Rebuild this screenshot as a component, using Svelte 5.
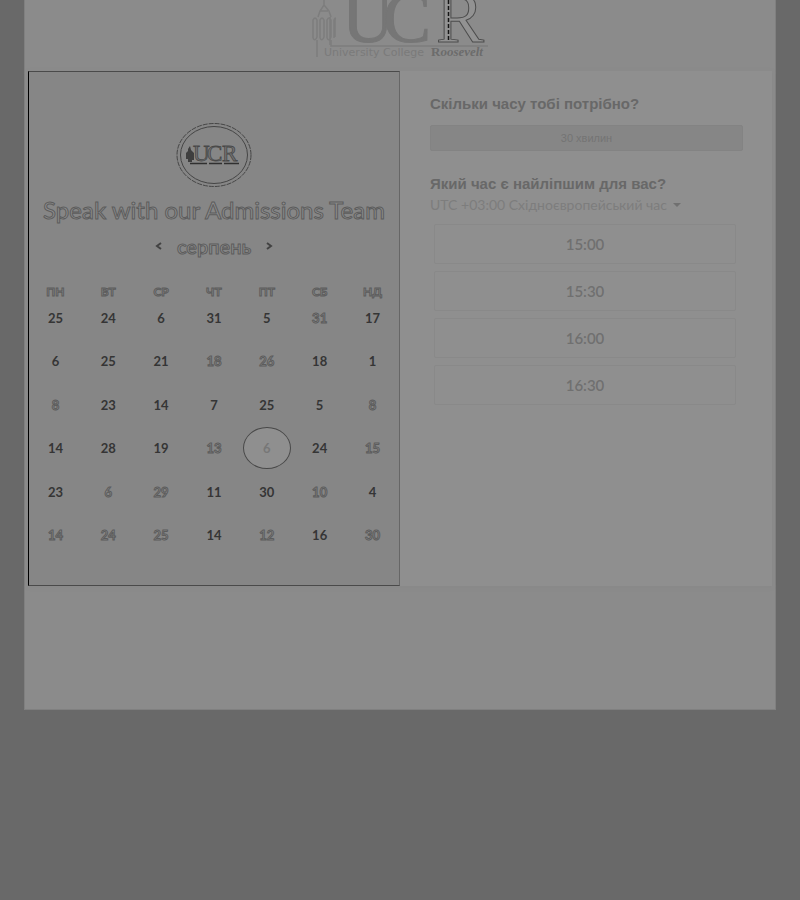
<script>
  const weekdays = ['ПН', 'ВТ', 'СР', 'ЧТ', 'ПТ', 'СБ', 'НД'];
  const weeks = [
    [25, 24, 6, 31, 5, 31, 17],
    [6, 25, 21, 18, 26, 18, 1],
    [8, 23, 14, 7, 25, 5, 8],
    [14, 28, 19, 13, 6, 24, 15],
    [23, 6, 29, 11, 30, 10, 4],
    [14, 24, 25, 14, 12, 16, 30]
  ];
  // Days drawn as a faint outline rather than a dark one
  const faint = ['0-5', '1-3', '1-4', '2-0', '2-6', '3-3', '3-6', '4-1', '4-2', '4-5', '5-0', '5-1', '5-2', '5-4', '5-6'];
  const slots = ['15:00', '15:30', '16:00', '16:30'];
  let selected = $state('3-4');
</script>

<div class="page">
  <main class="sheet">
    <header>
      <svg class="logo" viewBox="0 0 180 64" role="img" aria-label="University College Roosevelt">
        <g fill="none" stroke="#7d7d7d" stroke-width="1.5">
          <path d="M7 57V40M20 45V17M3 38V20Q5 16 7 20V37Q5 42 3 38M10 38V20Q12 16 14 20V37Q12 42 10 38M17 38V20Q19 16 21 20V37Q19 42 17 38M24 38V20Q26 16 25 20V37" />
          <path d="M8 17L10 11L14 5L19 11L21 17M14 5V0M10 11H18M21 40V46H178" />
        </g>
        <text class="mark" x="32" y="42" font-size="72" fill="#767676" stroke="#767676">U</text>
        <text class="mark" x="73" y="42" font-size="72" fill="#767676" stroke="#767676">C</text>
        <text class="mark" x="126" y="42" font-size="72" fill="#929292" stroke="#4c4c4c">R</text>
        <path d="M138.500 0V40" stroke="#151515" stroke-width="1.500" stroke-dasharray="4 2" />
        <text class="name" x="14" y="56" font-size="11">University College</text>
        <text class="mark roosevelt" x="121" y="56" font-size="13">R<tspan font-style="italic">oosevelt</tspan></text>
      </svg>
    </header>

    <div class="cards">
      <section class="calendar">
        <svg class="badge" viewBox="0 0 76 66" role="img" aria-label="UCR">
          <g fill="none" stroke="#454545">
            <ellipse cx="38" cy="33" rx="37" ry="31.500" stroke-dasharray="5 1" />
            <ellipse cx="38" cy="33" rx="33.500" ry="28.500" />
          </g>
          <path d="M10 31L12 29V27L14 24L15 28L18 31V38H16V40H12V37H10Z" fill="#3e3e3e" />
          <text class="mark" x="17" y="39" font-size="23" fill="#747474" stroke="#484848" stroke-width=".8">U</text>
          <text class="mark" x="31" y="39" font-size="23" fill="#747474" stroke="#484848" stroke-width=".8">C</text>
          <text class="mark" x="46" y="39" font-size="23" fill="#747474" stroke="#484848" stroke-width=".8">R</text>
          <path d="M14 41.500H63" stroke="#303030" stroke-width="1.500" stroke-dasharray="17 2 13 2 15 2" />
        </svg>
        <h1>Speak with our Admissions Team</h1>
        <nav aria-label="Місяць">
          <button aria-label="Попередній місяць"><svg viewBox="0 0 8 8"><path d="M6 1L2 4L6 7" /></svg></button>
          <h2>серпень</h2>
          <button aria-label="Наступний місяць"><svg viewBox="0 0 8 8"><path d="M2 1L6 4L2 7" /></svg></button>
        </nav>
        <table>
          <thead>
            <tr>{#each weekdays as day}<th scope="col">{day}</th>{/each}</tr>
          </thead>
          <tbody>
            {#each weeks as week, w}
              <tr>
                {#each week as day, d}
                  {@const key = `${w}-${d}`}
                  <td>
                    <button
                      class="day"
                      class:faint={faint.includes(key)}
                      class:selected={selected === key}
                      onclick={() => (selected = key)}>{day}</button>
                  </td>
                {/each}
              </tr>
            {/each}
          </tbody>
        </table>
      </section>

      <section class="times">
        <h3>Скільки часу тобі потрібно?</h3>
        <button class="duration">30 хвилин</button>
        <h3>Який час є найліпшим для вас?</h3>
        <button class="zone">UTC +03:00 Східноєвропейський час <span class="caret"></span></button>
        <div class="slots">
          {#each slots as slot}<button>{slot}</button>{/each}
        </div>
      </section>
    </div>
  </main>
</div>

<style>
  :global(body) {
    margin: 0;
    background: #696969;
  }
  .page {
    box-sizing: border-box;
    min-height: 100vh;
    padding: 0 24px;
    font-family: Lato, "Liberation Sans", sans-serif;
  }
  .sheet {
    box-sizing: border-box;
    padding: 0 3px 123px;
    background: #8b8b8b;
    border: 1px solid #808080;
    border-top: 0;
  }
  header {
    display: flex;
    justify-content: center;
    height: 71px;
  }
  .logo {
    width: 180px;
    height: 64px;
  }
  .mark {
    font-family: "Liberation Serif", serif;
  }
  .name {
    font-family: "DejaVu Sans", sans-serif;
    fill: #7a7a7a;
  }
  .roosevelt {
    font-weight: bold;
    fill: #6c6c6c;
  }
  h1, h2, h3 {
    margin: 0;
  }
  button {
    padding: 0;
    border: 0;
    background: none;
    font: inherit;
    color: inherit;
    cursor: pointer;
  }
  .cards {
    display: grid;
    grid-template-columns: 1fr 1fr;
    box-shadow: 0 1px 4px #8080804d;
  }
  .calendar {
    display: flex;
    flex-direction: column;
    align-items: center;
    box-sizing: border-box;
    padding: 50px 0 28px;
    background: #868686;
    border: 1px solid #4a4a4a;
    border-left-color: #000;
    border-right-color: #666;
  }
  .badge {
    width: 76px;
    height: 66px;
  }
  h1, h2, th {
    color: #8d8d8d;
    -webkit-text-stroke: 1px #5c5c5c;
  }
  h1 {
    margin-top: 8px;
    font-size: 24px;
    font-weight: 400;
    line-height: 28px;
    white-space: nowrap;
  }
  nav {
    display: flex;
    align-items: center;
    gap: 14px;
    margin-top: 8px;
  }
  nav button, nav svg {
    display: block;
    width: 8px;
    height: 8px;
  }
  nav path {
    fill: none;
    stroke: #424242;
    stroke-width: 2;
  }
  h2 {
    font-size: 20px;
    font-weight: 600;
    line-height: 28px;
  }
  table {
    width: 100%;
    margin-top: 28px;
    table-layout: fixed;
    border-collapse: collapse;
  }
  th {
    height: 8px;
    padding: 0;
    font-size: 12px;
    line-height: 8px;
  }
  td {
    height: 43px;
    padding: 0;
    text-align: center;
  }
  tr:nth-child(even) td {
    height: 44px;
  }
  .day {
    display: block;
    width: 48px;
    height: 42px;
    margin: 0 auto;
    border-radius: 50%;
    font-size: 13px;
    font-weight: 700;
    color: #353535;
  }
  .day.faint {
    color: #8d8d8d;
    -webkit-text-stroke: 1px #5c5c5c;
  }
  .day.selected {
    border: 1px solid #484848;
    background: #8f8f8f;
    color: #777;
  }
  .times {
    padding: 24px 29px 0 30px;
    background: #8f8f8f;
  }
  h3 {
    font-family: "Liberation Sans", Arial, sans-serif;
    font-size: 15px;
    line-height: 18px;
    color: #686868;
    white-space: nowrap;
  }
  .duration {
    display: block;
    width: 100%;
    height: 26px;
    margin: 12px 0 24px;
    background: #868686;
    border: 1px solid #838383;
    border-radius: 2px;
    font-family: "Liberation Sans", Arial, sans-serif;
    font-size: 11px;
    color: #747474;
  }
  .zone {
    display: flex;
    align-items: center;
    gap: 6px;
    font-size: 14px;
    line-height: 24px;
    color: #7d7d7d;
    white-space: nowrap;
  }
  .caret {
    border: 4px solid transparent;
    border-top-color: #707070;
    border-bottom: 0;
  }
  .slots {
    display: grid;
    gap: 7px;
    margin: 7px 7px 0 4px;
  }
  .slots button {
    height: 40px;
    border: 1px solid #898989;
    border-radius: 2px;
    font-size: 15px;
    font-weight: 600;
    color: #707070;
  }
</style>
